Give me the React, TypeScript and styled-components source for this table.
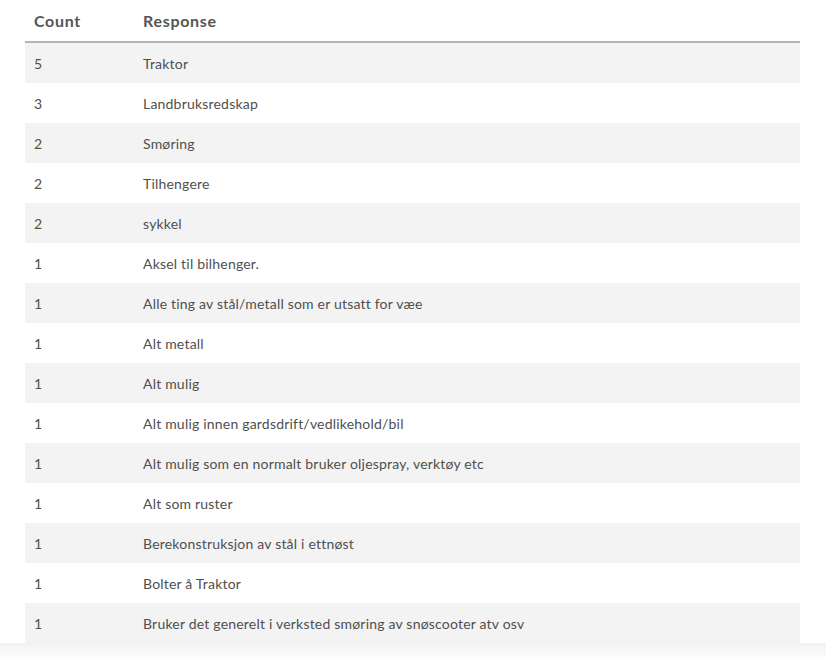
import React from "react";
import styled, { createGlobalStyle } from "styled-components";

const rows: [number, string][] = [
    [5, "Traktor"],
    [3, "Landbruksredskap"],
    [2, "Smøring"],
    [2, "Tilhengere"],
    [2, "sykkel"],
    [1, "Aksel til bilhenger."],
    [1, "Alle ting av stål/metall som er utsatt for væe"],
    [1, "Alt metall"],
    [1, "Alt mulig"],
    [1, "Alt mulig innen gardsdrift/vedlikehold/bil"],
    [1, "Alt mulig som en normalt bruker oljespray, verktøy etc"],
    [1, "Alt som ruster"],
    [1, "Berekonstruksjon av stål i ettnøst"],
    [1, "Bolter å Traktor"],
    [1, "Bruker det generelt i verksted smøring av snøscooter atv osv"],
];

const App = () => {
    return (
        <>
            <Global />
            <Page>
                <Table>
                    <Head>
                        <HeadCell>Count</HeadCell>
                        <HeadCell>Response</HeadCell>
                    </Head>
                    {rows.map(([count, text], i) => (
                        <Row key={i} $shaded={i % 2 === 0}>
                            <Cell>{count}</Cell>
                            <Cell>{text}</Cell>
                        </Row>
                    ))}
                </Table>
                <Fade />
            </Page>
        </>
    );
};

export default App;

const Global = createGlobalStyle`
body {
    margin: 0;
    background: #fff;
    font-family: Lato, "Liberation Sans", sans-serif;
}
`;

const Page = styled.div`
width: 826px;
height: 657px;
overflow: hidden;
display: flex;
flex-direction: column;
`;

const Table = styled.div`
width: 775px;
margin-left: 25px;
display: flex;
flex-direction: column;
`;

const Head = styled.div`
height: 41px;
display: grid;
grid-template-columns: 109px 1fr;
align-items: center;
border-bottom: 2px solid #b4b4b4;
`;

const HeadCell = styled.div`
padding-left: 9px;
font-size: 16px;
font-weight: 700;
color: #555;
letter-spacing: 0.7px;
`;

const Row = styled.div<{ $shaded: boolean }>`
height: 40px;
display: grid;
grid-template-columns: 109px 1fr;
align-items: center;
background: ${(p) => (p.$shaded ? "#f3f3f3" : "#fff")};
`;

const Cell = styled.div`
padding-left: 9px;
font-size: 14px;
letter-spacing: 0.2px;
color: #4f4f4f;
white-space: nowrap;
`;

const Fade = styled.div`
flex: 1;
background: linear-gradient(#f2f2f2, #fbfbfb);
`;
